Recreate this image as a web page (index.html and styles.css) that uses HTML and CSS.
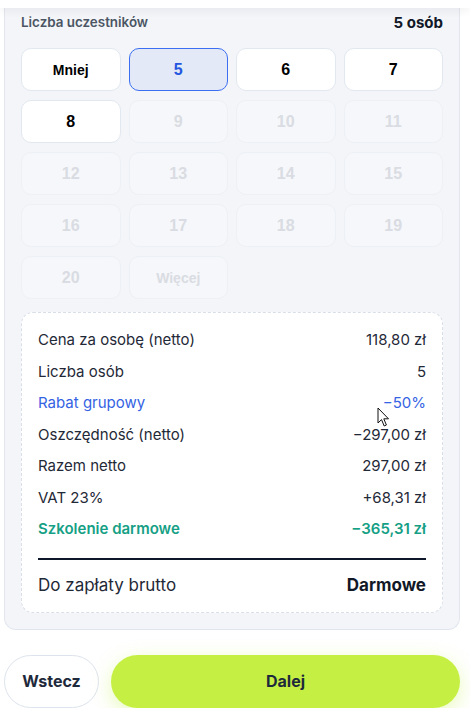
FILE: index.html
```html
<!DOCTYPE html>
<html lang="pl">
<head>
    <meta charset="UTF-8">
    <meta name="viewport" content="width=device-width, initial-scale=1.0">
    <title>Liczba uczestników</title>
    <link rel="stylesheet" href="styles.css">
</head>
<body>

    <!-- Sticky top bar (scrolled) -->
    <div class="top-bar"></div>

    <div class="page">

        <!-- Participants panel -->
        <div class="panel">
            <div class="panel-head">
                <span class="panel-label">Liczba uczestników</span>
                <span class="panel-value">5 osób</span>
            </div>

            <div class="count-grid">
                <button class="count-btn text-btn">Mniej</button>
                <button class="count-btn active">5</button>
                <button class="count-btn">6</button>
                <button class="count-btn">7</button>
                <button class="count-btn">8</button>
                <button class="count-btn disabled">9</button>
                <button class="count-btn disabled">10</button>
                <button class="count-btn disabled">11</button>
                <button class="count-btn disabled">12</button>
                <button class="count-btn disabled">13</button>
                <button class="count-btn disabled">14</button>
                <button class="count-btn disabled">15</button>
                <button class="count-btn disabled">16</button>
                <button class="count-btn disabled">17</button>
                <button class="count-btn disabled">18</button>
                <button class="count-btn disabled">19</button>
                <button class="count-btn disabled">20</button>
                <button class="count-btn disabled text-btn">Więcej</button>
            </div>

            <!-- Price summary -->
            <div class="summary">
                <div class="sum-row"><span>Cena za osobę (netto)</span><span>118,80 zł</span></div>
                <div class="sum-row"><span>Liczba osób</span><span>5</span></div>
                <div class="sum-row discount">
                    <span>Rabat grupowy</span><span>−50%</span>
                    <svg class="cursor" width="13" height="21" viewBox="0 0 13 21">
                        <path d="M1 1 L1 16 L4.5 12.6 L7.2 19 L9.4 18 L6.8 11.8 L11.5 11.8 Z" fill="#fff" stroke="#111" stroke-width="1" stroke-linejoin="round"/>
                    </svg>
                </div>
                <div class="sum-row"><span>Oszczędność (netto)</span><span>−297,00 zł</span></div>
                <div class="sum-row"><span>Razem netto</span><span>297,00 zł</span></div>
                <div class="sum-row"><span>VAT 23%</span><span>+68,31 zł</span></div>
                <div class="sum-row free"><span>Szkolenie darmowe</span><span>−365,31 zł</span></div>

                <div class="sum-divider"></div>

                <div class="sum-total"><span>Do zapłaty brutto</span><strong>Darmowe</strong></div>
            </div>
        </div>

        <!-- Navigation -->
        <div class="nav-buttons">
            <button class="btn-back">Wstecz</button>
            <button class="btn-next">Dalej</button>
        </div>

    </div>

</body>
</html>
```

FILE: styles.css
```css
/* General Styles */
body {
    margin: 0;
    padding: 0;
    background: #ffffff;
    font-family: Inter, "Noto Sans", sans-serif;
    color: #1f2937;
}

/* Top bar shadow */
.top-bar {
    height: 8px;
    background: #ffffff;
    position: relative;
    z-index: 2;
    box-shadow: 0 3px 8px rgba(15, 23, 42, 0.06);
}

.page {
    padding: 0 10px 0 4px;
}

/* Panel */
.panel {
    background: #f3f5f9;
    border: 1px solid #e1e6ee;
    border-top: none;
    border-radius: 0 0 12px 12px;
    padding: 4px 16px 16px;
}

.panel-head {
    display: flex;
    justify-content: space-between;
    align-items: center;
    height: 20px;
}

.panel-label {
    font-size: 13.4px;
    font-weight: 600;
    color: #4b5563;
}

.panel-value {
    font-size: 15px;
    font-weight: 700;
    color: #111827;
}

/* Participant buttons */
.count-grid {
    display: grid;
    grid-template-columns: repeat(4, 1fr);
    column-gap: 8px;
    row-gap: 9px;
    margin-top: 16px;
}

.count-btn {
    height: 43px;
    background: #ffffff;
    border: 1px solid #e2e8f0;
    border-radius: 10px;
    font-family: "Liberation Sans", Arial, sans-serif;
    font-size: 16px;
    font-weight: 700;
    color: #000000;
    padding: 0;
}

.count-btn.text-btn {
    font-size: 14px;
}

.count-btn.active {
    background: #e3e9f6;
    border-color: #3b6ef0;
    color: #2456e0;
}

.count-btn.disabled {
    background: #f6f7fa;
    border-color: #edf0f4;
    color: #d9dce2;
}

/* Summary box */
.summary {
    margin-top: 13px;
    background: #ffffff;
    border: 1px dashed #d9dfe8;
    border-radius: 12px;
    padding: 11px 16px 15px;
}

.sum-row {
    display: flex;
    justify-content: space-between;
    padding: 6px 0;
    line-height: 19.5px;
    font-size: 15px;
    color: #1f2937;
    position: relative;
}

.sum-row.discount {
    color: #3563e3;
}

.sum-row.free {
    color: #15a085;
    font-weight: 600;
}

.cursor {
    position: absolute;
    left: 339px;
    top: 20px;
}

.sum-divider {
    height: 2px;
    background: #0f172a;
    margin-top: 13px;
}

.sum-total {
    display: flex;
    justify-content: space-between;
    margin-top: 13px;
    line-height: 24px;
    font-size: 17px;
    color: #1f2937;
}

.sum-total strong {
    font-weight: 700;
    color: #111827;
}

/* Navigation Buttons */
.nav-buttons {
    display: flex;
    gap: 12px;
    margin-top: 25px;
}

.btn-back,
.btn-next {
    height: 53px;
    border-radius: 27px;
    font-family: Inter, "Noto Sans", sans-serif;
    font-size: 16px;
    font-weight: 700;
    color: #1e293b;
}

.btn-back {
    width: 95px;
    background: #ffffff;
    border: 1px solid #dde3ec;
}

.btn-next {
    flex: 1;
    background: #c5f043;
    border: none;
    box-shadow: 0 6px 20px rgba(190, 240, 60, 0.35);
}
```
